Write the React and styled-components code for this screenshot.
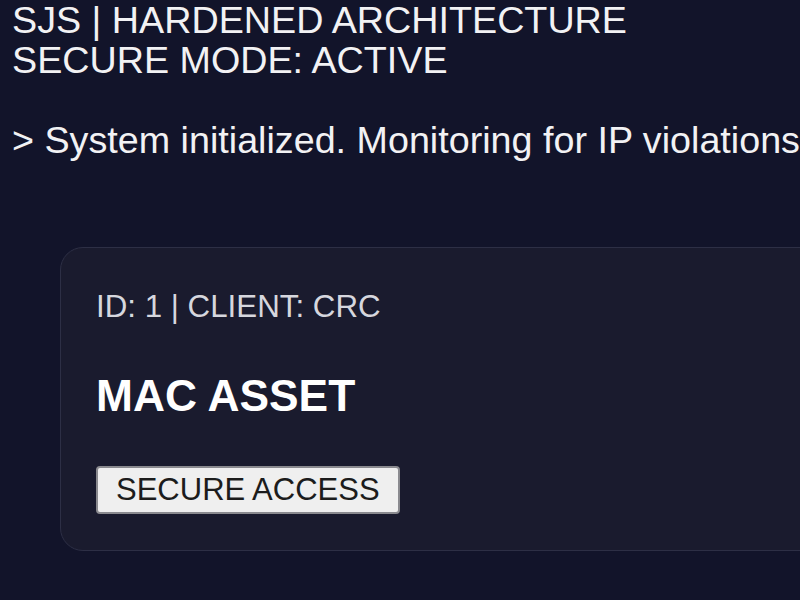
import React from "react";
import styled, { createGlobalStyle } from "styled-components";

const Global = createGlobalStyle`
  html, body {
    margin: 0;
    padding: 0;
    background: #12142a;
    overflow: hidden;
  }
  body {
    font-family: "Liberation Sans", Arial, sans-serif;
    color: #f2f2f4;
  }
`;

const Page = styled.main`
  width: 800px;
  height: 600px;
  padding: 0 0 0 12px;
  box-sizing: border-box;
  overflow: hidden;
`;

const Header = styled.header`
  font-size: 37.7px;
  line-height: 40px;
  white-space: nowrap;
`;

const Line = styled.div`
  display: block;
`;

const Log = styled.p`
  margin: 40px 0 0;
  font-size: 37.7px;
  line-height: 40px;
  white-space: nowrap;
`;

const Card = styled.section`
  margin: 87px 0 0 48px;
  width: 900px;
  box-sizing: border-box;
  background: #1a1b2e;
  border: 1.5px solid #2d2f45;
  border-radius: 23px;
  padding: 41px 35px 36px;
`;

const Meta = styled.div`
  font-size: 31.3px;
  line-height: 36px;
  color: #d6d7de;
`;

const Title = styled.h3`
  margin: 46px 0 45px;
  font-size: 44.3px;
  line-height: 50px;
  font-weight: 700;
  color: #ffffff;
`;

const Button = styled.button`
  display: block;
  font-family: "Liberation Sans", Arial, sans-serif;
  font-size: 31px;
  line-height: 34px;
  color: #1c1c1c;
  background: #efefef;
  border: 2px solid #8a8a8f;
  border-radius: 4px;
  padding: 5px 18px;
  height: 48px;
  cursor: pointer;
`;

export default function App() {
  return (
    <>
      <Global />
      <Page>
        <Header>
          <Line>SJS | HARDENED ARCHITECTURE</Line>
          <Line>SECURE MODE: ACTIVE</Line>
        </Header>
        <Log>&gt; System initialized. Monitoring for IP violations</Log>
        <Card>
          <Meta>ID: 1 | CLIENT: CRC</Meta>
          <Title>MAC ASSET</Title>
          <Button>SECURE ACCESS</Button>
        </Card>
      </Page>
    </>
  );
}
